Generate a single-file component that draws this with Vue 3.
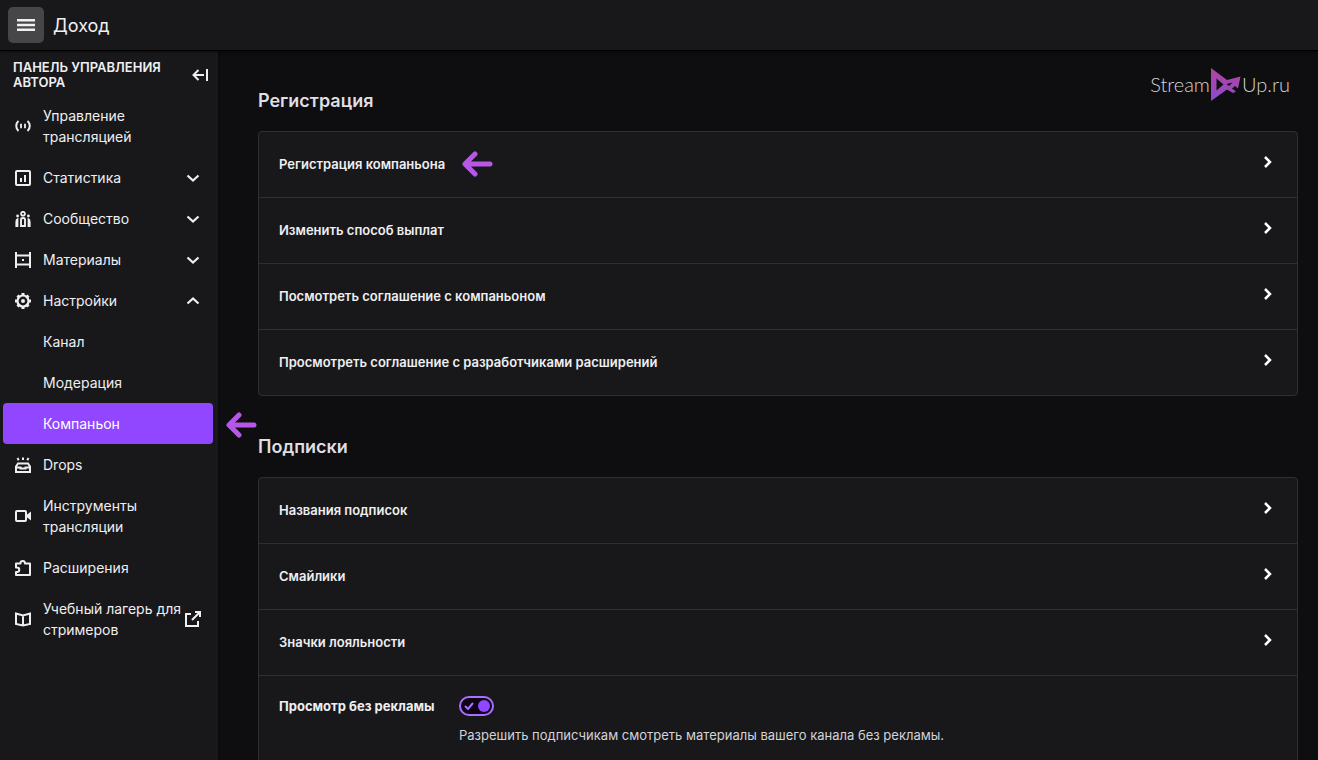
<script setup>
import { ref } from 'vue'

const adFree = ref(true)

const nav = [
  { label: 'Управление трансляцией', icon: 'live', narrow: true },
  { label: 'Статистика', icon: 'stats', arrow: 'down' },
  { label: 'Сообщество', icon: 'community', arrow: 'down' },
  { label: 'Материалы', icon: 'film', arrow: 'down' },
  { label: 'Настройки', icon: 'gear', arrow: 'up' },
  { label: 'Канал' },
  { label: 'Модерация' },
  { label: 'Компаньон', active: true },
  { label: 'Drops', icon: 'drops' },
  { label: 'Инструменты трансляции', icon: 'camera', narrow: true },
  { label: 'Расширения', icon: 'puzzle' },
  { label: 'Учебный лагерь для стримеров', icon: 'book', external: true },
]

const registration = [
  { label: 'Регистрация компаньона', pointer: true },
  { label: 'Изменить способ выплат' },
  { label: 'Посмотреть соглашение с компаньоном' },
  { label: 'Просмотреть соглашение с разработчиками расширений' },
]

const subscriptions = ['Названия подписок', 'Смайлики', 'Значки лояльности']
</script>

<template>
  <div class="app">
    <header class="topbar">
      <button class="menu-button" type="button" aria-label="Меню">
        <svg width="18" height="12" viewBox="0 0 18 12"><path d="M0 1.200h18M0 6h18M0 10.800h18" stroke="#efeff1" stroke-width="2.400" /></svg>
      </button>
      <span class="page-title">Доход</span>
    </header>

    <div class="body">
      <aside class="sidebar">
        <div class="side-head">
          <h2>Панель управления автора</h2>
          <button class="collapse" type="button" aria-label="Свернуть">
            <svg width="16" height="14" viewBox="0 0 16 14" fill="none" stroke="#efeff1" stroke-width="2">
              <path d="M15 1v12M12 7H2M6.500 2 1.500 7l5 5" />
            </svg>
          </button>
        </div>

        <nav>
          <a v-for="item in nav" :key="item.label" href="#" class="nav-item" :class="{ active: item.active }">
            <svg class="nav-icon" width="16" height="16" viewBox="0 0 16 16" fill="none" stroke="currentColor" stroke-width="2" aria-hidden="true">
              <template v-if="item.icon === 'live'">
                <path d="M3.500 3C.500 5.500.500 10.500 3.500 13M12.500 3c3 2.500 3 7.500 0 10" stroke-width="2" />
                <path d="M6 5.800v4.400M10 5.800v4.400" stroke-width="1.800" />
              </template>
              <template v-else-if="item.icon === 'stats'">
                <rect x="1" y="1" width="14" height="14" rx="1" />
                <path d="M6 8v4M10 5v7" />
              </template>
              <template v-else-if="item.icon === 'community'">
                <circle cx="8" cy="2.700" r="1.900" stroke-width="1.800" />
                <path d="M6 15V8.500Q6 7 8 7t2 1.500V15Z" stroke-width="1.900" />
                <path d="M1.200 16v-5q0-2.500 1.400-3v8M14.800 16v-5q0-2.500-1.400-3v8" stroke-width="1.600" />
                <circle cx="2.600" cy="5" r="1.400" fill="currentColor" stroke="none" />
                <circle cx="13.400" cy="5" r="1.400" fill="currentColor" stroke="none" />
              </template>
              <template v-else-if="item.icon === 'film'">
                <path d="M1 0v16M15 0v16M1 3.500h14M1 12.500h14" />
                <path d="M7 8h2" />
              </template>
              <template v-else-if="item.icon === 'gear'">
                <circle cx="8" cy="8" r="5.500" stroke-width="2.200" />
                <circle cx="8" cy="8" r="2" fill="currentColor" stroke="none" />
                <path d="M8 0v2.500M8 13.500V16M0 8h2.500M13.500 8H16M2.500 2.500l1.500 1.500M12 12l1.500 1.500M13.500 2.500 12 4M4 12l-1.500 1.500" stroke-width="3" />
              </template>
              <template v-else-if="item.icon === 'drops'">
                <path d="M1 15V9.500L3 6.500h10l2 3V15ZM1 10.500h4.500v1h5v-1H15" stroke-width="2" />
                <path d="M8 .500v2.500M2.500 1l1.200 2.200M13.500 1l-1.200 2.200" stroke-width="2" />
              </template>
              <template v-else-if="item.icon === 'camera'">
                <rect x="1" y="3" width="10" height="10" rx="1" />
                <path d="M11.500 7 16 3.500v9L11.500 9Z" fill="currentColor" stroke="none" />
              </template>
              <template v-else-if="item.icon === 'puzzle'">
                <path d="M1 3.500h4.500V3a2.200 2 0 0 1 4.400 0v.500H15V15H1v-3h1a2 2 0 0 0 0-4.500H1Z" stroke-width="2" stroke-linejoin="round" />
              </template>
              <template v-else-if="item.icon === 'book'">
                <path d="M1 2.500 8 4.500l7-2v10.500L8 14.500 1 13ZM8 4.500v10" stroke-width="2" />
              </template>
            </svg>
            <span class="nav-label" :class="{ narrow: item.narrow }">{{ item.label }}</span>
            <svg v-if="item.arrow" class="nav-end" :class="item.arrow" width="16" height="16" viewBox="0 0 16 16" fill="none" stroke="currentColor" stroke-width="2.200" aria-hidden="true">
              <path d="m2.500 5.500 5.500 5 5.500-5" />
            </svg>
            <svg v-if="item.external" class="nav-end" width="16" height="16" viewBox="0 0 16 16" fill="none" stroke="currentColor" stroke-width="2" aria-hidden="true">
              <path d="M6 3H1v12h12v-5M10 1h5v5M15 1 7 9" />
            </svg>
            <svg v-if="item.active" class="pointer side-pointer" width="32" height="28" viewBox="0 0 32 28" aria-hidden="true">
              <path d="M28 14H4M13 4 3 14l10 10" />
            </svg>
          </a>
        </nav>
      </aside>

      <main class="content">
        <div class="brand">
          <span>Stream</span>
          <svg width="30" height="33" viewBox="0 0 30 33" aria-hidden="true">
            <defs>
              <linearGradient id="brand-fill" x1="0" y1="0" x2="0" y2="1">
                <stop offset="0" stop-color="#b5439c" />
                <stop offset="1" stop-color="#8a4bd0" />
              </linearGradient>
            </defs>
            <path d="M0 0 16 12 29.500 8.500 27 20.500l-3-2.500-3 2.500 4 3-3 1.500-6-3.500L0 33ZM5.500 10.500v12l7-6ZM15.500 16l2.500 2 3.500-3.500Z" fill="url(#brand-fill)" fill-rule="evenodd" />
          </svg>
          <span>Up.ru</span>
        </div>

        <section>
          <h3>Регистрация</h3>
          <div class="card">
            <a v-for="row in registration" :key="row.label" href="#" class="row">
              <span>{{ row.label }}</span>
              <svg v-if="row.pointer" class="pointer" width="32" height="28" viewBox="0 0 32 28" aria-hidden="true">
                <path d="M28 13H4M13 3 3 13l10 10" />
              </svg>
              <svg class="chevron" width="9" height="12" viewBox="0 0 9 12" aria-hidden="true"><path d="m2 1 5 5-5 5" /></svg>
            </a>
          </div>
        </section>

        <section>
          <h3>Подписки</h3>
          <div class="card">
            <a v-for="label in subscriptions" :key="label" href="#" class="row">
              <span>{{ label }}</span>
              <svg class="chevron" width="9" height="12" viewBox="0 0 9 12" aria-hidden="true"><path d="m2 1 5 5-5 5" /></svg>
            </a>
            <div class="setting">
              <label for="ad-free">Просмотр без рекламы</label>
              <div class="setting-body">
                <span class="switch">
                  <input id="ad-free" v-model="adFree" type="checkbox" role="switch" aria-describedby="ad-free-hint" />
                  <svg v-if="adFree" class="tick" width="10" height="8" viewBox="0 0 10 8" aria-hidden="true"><path d="m1 4 3 3 5-6" /></svg>
                </span>
                <p id="ad-free-hint">Разрешить подписчикам смотреть материалы вашего канала без рекламы.</p>
              </div>
            </div>
          </div>
        </section>
      </main>
    </div>
  </div>
</template>

<style>
body {
  margin: 0;
  background: #0e0e10;
}
</style>

<style scoped>
.app {
  display: flex;
  flex-direction: column;
  height: 100vh;
  overflow: hidden;
  color: #efeff1;
  font-family: Inter, Roboto, "Liberation Sans", sans-serif;
  font-size: 14px;
  line-height: 21px;
}
button {
  padding: 0;
  border: 0;
  background: none;
  color: inherit;
  cursor: pointer;
}
a {
  color: inherit;
  text-decoration: none;
}
svg {
  flex: none;
  display: block;
}
.topbar {
  flex: none;
  display: flex;
  align-items: center;
  gap: 9px;
  height: 50px;
  padding-left: 8px;
  background: #18181b;
  border-bottom: 1px solid #000;
  position: relative;
  z-index: 1;
  box-shadow: 0 1px 2px rgba(0, 0, 0, 0.5);
}
.menu-button {
  display: grid;
  place-items: center;
  width: 36px;
  height: 36px;
  border-radius: 5px;
  background: #464649;
}
.page-title {
  padding-top: 2px;
  font-size: 18px;
  line-height: 24px;
}
.body {
  flex: 1;
  display: flex;
  min-height: 0;
}
.sidebar {
  flex: none;
  box-sizing: border-box;
  width: 218px;
  padding: 9px 5px 0 3px;
  background: #18181b;
  box-shadow: 0 0 3px rgba(0, 0, 0, 0.5);
}
.side-head {
  display: flex;
  align-items: center;
  justify-content: space-between;
  padding: 0 5px 5px 10px;
}
h2 {
  margin: 0;
  width: 160px;
  font-size: 13px;
  line-height: 15px;
  font-weight: 600;
  text-transform: uppercase;
}
.nav-item {
  position: relative;
  display: flex;
  align-items: center;
  padding: 10px 12px;
  border-radius: 4px;
}
.nav-item.active {
  background: #9147ff;
  color: #fff;
}
.nav-label {
  flex: 1;
  margin-left: 12px;
}
.nav-label.narrow {
  flex: 0 1 120px;
}
.nav-end.up {
  transform: rotate(180deg);
}
.pointer {
  fill: none;
  stroke: #b757e8;
  stroke-width: 5;
  stroke-linecap: round;
  stroke-linejoin: round;
}
.side-pointer {
  position: absolute;
  top: 8px;
  left: 223px;
}
.content {
  position: relative;
  flex: 1;
  min-width: 0;
  padding: 38px 20px 0 40px;
  overflow: hidden;
}
.brand {
  position: absolute;
  top: 17px;
  right: 28px;
  display: flex;
  align-items: center;
  gap: 1px;
  color: #d3d3d6;
  font-family: Lato, Inter, sans-serif;
  font-size: 20px;
  font-weight: 300;
}
section {
  margin-bottom: 39px;
}
h3 {
  margin: 0 0 18px;
  color: #dedee3;
  font-size: 18px;
  line-height: 24px;
  font-weight: 600;
}
.card {
  background: #18181b;
  border: 1px solid #2f2f33;
  border-radius: 4px;
}
.row {
  display: flex;
  align-items: center;
  gap: 17px;
  height: 65px;
  padding: 0 25px 0 20px;
  font-size: 13px;
  font-weight: 600;
}
.row + .row,
.setting {
  border-top: 1px solid #2f2f33;
}
.chevron {
  margin-left: auto;
  padding-bottom: 5px;
  fill: none;
  stroke: #fff;
  stroke-width: 2.5;
}
.setting {
  display: flex;
  padding: 20px;
  font-size: 13px;
}
.setting label {
  flex: none;
  width: 180px;
  font-weight: 700;
}
.switch {
  position: relative;
  display: block;
  width: 35px;
  height: 20px;
}
.switch input {
  appearance: none;
  box-sizing: border-box;
  display: flex;
  align-items: center;
  width: 100%;
  height: 100%;
  margin: 0;
  padding: 0 2px;
  border: 2px solid #a970ff;
  border-radius: 10px;
  background: #0e0417;
  cursor: pointer;
}
.switch input::before {
  content: "";
  width: 12px;
  height: 12px;
  border-radius: 50%;
  background: #9147ff;
}
.switch input:checked::before {
  margin-left: auto;
}
.tick {
  position: absolute;
  top: 6px;
  left: 5px;
  fill: none;
  stroke: #a970ff;
  stroke-width: 2;
  pointer-events: none;
}
.setting p {
  margin: 9px 0 0;
  color: #d3d3d9;
}
</style>
